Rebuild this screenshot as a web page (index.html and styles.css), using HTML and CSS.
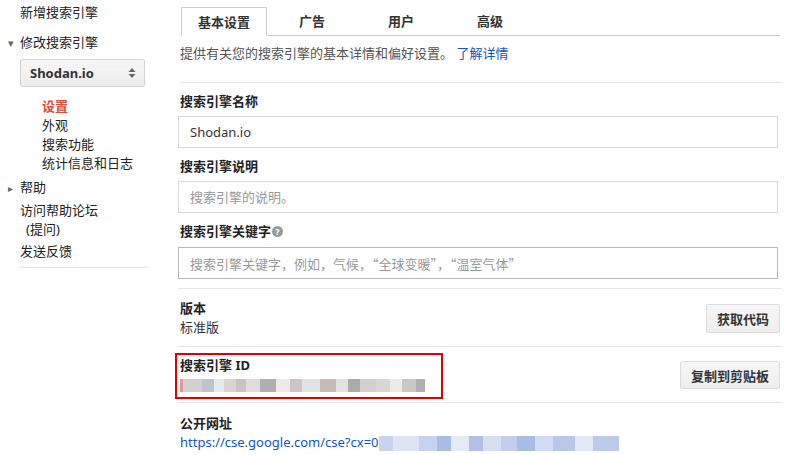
FILE: index.html
```html
<!DOCTYPE html>
<html lang="zh-CN">
<head>
    <meta charset="UTF-8">
    <title>搜索引擎设置</title>
    <link rel="stylesheet" href="styles.css">
</head>
<body>
<div class="page">
    <!-- left navigation -->
    <div class="sidebar">
        <div class="nav-item first">新增搜索引擎</div>
        <div class="nav-item toggle open"><span class="arrow">&#9662;</span>修改搜索引擎</div>
        <div class="engine-select">
            <span>Shodan.io</span>
            <svg width="8" height="12" viewBox="0 0 8 12"><path d="M4 1 L7.5 5 L0.5 5 Z M4 11 L7.5 7 L0.5 7 Z" fill="#666"/></svg>
        </div>
        <div class="sub-nav">
            <div class="sub-item active">设置</div>
            <div class="sub-item">外观</div>
            <div class="sub-item">搜索功能</div>
            <div class="sub-item">统计信息和日志</div>
        </div>
        <div class="nav-item toggle help"><span class="arrow small">&#9656;</span>帮助</div>
        <div class="nav-item forum">访问帮助论坛<br><span class="indent">(提问)</span></div>
        <div class="nav-item feedback">发送反馈</div>
    </div>

    <!-- main settings -->
    <div class="main">
        <div class="tabs">
            <div class="tab active">基本设置</div>
            <div class="tab">广告</div>
            <div class="tab">用户</div>
            <div class="tab">高级</div>
        </div>
        <p class="intro">提供有关您的搜索引擎的基本详情和偏好设置。 <a href="#">了解详情</a></p>

        <div class="section fields">
            <div class="field-label">搜索引擎名称</div>
            <input class="text-input" type="text" value="Shodan.io">
            <div class="field-label">搜索引擎说明</div>
            <input class="text-input" type="text" placeholder="搜索引擎的说明。">
            <div class="field-label">搜索引擎关键字<span class="help-icon">?</span></div>
            <input class="text-input dark" type="text" placeholder="搜索引擎关键字，例如，气候，“全球变暖”，“温室气体”">
        </div>

        <div class="section row">
            <div>
                <div class="field-label">版本</div>
                <div class="value">标准版</div>
            </div>
            <button class="btn">获取代码</button>
        </div>

        <div class="section row id-row">
            <div class="highlight">
                <div class="field-label">搜索引擎 ID</div>
                <div class="value"><span class="blur gray"></span></div>
            </div>
            <button class="btn">复制到剪贴板</button>
        </div>

        <div class="section last">
            <div class="field-label">公开网址</div>
            <div class="url"><a href="#">https://cse.google.com/cse?cx=0</a><span class="blur blue"></span></div>
        </div>
    </div>
</div>
</body>
</html>
```

FILE: styles.css
```css
body {
    margin: 0;
    font-family: "Noto Sans", "Noto Sans CJK SC", sans-serif;
    font-size: 13px;
    color: #222;
    background: #fff;
}

.page {
    display: flex;
}

/* sidebar */
.sidebar {
    width: 150px;
    padding-left: 20px;
    padding-top: 3px;
    flex-shrink: 0;
}

.nav-item {
    line-height: 19px;
}

.nav-item.toggle {
    margin-top: 11px;
}

.arrow {
    display: inline-block;
    width: 12px;
    margin-left: -12px;
    color: #666;
    font-size: 11px;
}

.arrow.small {
    font-size: 10px;
}

.engine-select {
    display: flex;
    justify-content: space-between;
    align-items: center;
    width: 125px;
    height: 28px;
    box-sizing: border-box;
    margin-top: 7px;
    padding: 0 8px 0 9px;
    border: 1px solid #d4d4d4;
    border-radius: 2px;
    background: linear-gradient(#f6f6f6, #ededed);
    font-weight: bold;
    color: #333;
}

.sub-nav {
    margin-top: 10px;
    padding-left: 22px;
}

.sub-item {
    line-height: 19px;
}

.sub-item.active {
    color: #dd4b39;
    font-weight: bold;
}

.nav-item.help {
    margin-top: 5px;
}

.nav-item.forum {
    margin-top: 3px;
}

.indent {
    padding-left: 6px;
}

.nav-item.feedback {
    margin-top: 3px;
    padding-bottom: 6px;
    width: 128px;
    border-bottom: 1px solid #e5e5e5;
}

/* main */
.main {
    width: 604px;
    margin-left: 8px;
    padding-top: 7px;
}

.tabs {
    display: flex;
    margin-left: 3px;
    border-bottom: 1px solid #ccc;
    width: 599px;
}

.tab {
    width: 88px;
    height: 28px;
    line-height: 28px;
    text-align: center;
    font-weight: bold;
    color: #333;
    box-sizing: border-box;
}

.tab.active {
    width: 86px;
    border: 1px solid #ccc;
    border-bottom-color: #fff;
    margin-bottom: -1px;
    height: 29px;
    background: #fff;
}

.tab + .tab {
    margin-left: 1px;
}

.intro {
    margin: 8px 0 0 2px;
    line-height: 19px;
    color: #555;
    padding-bottom: 19px;
    border-bottom: 1px solid #e5e5e5;
}

.intro a {
    color: #15c;
    text-decoration: none;
}

.section {
    border-bottom: 1px solid #e5e5e5;
    padding: 10px 2px 9px 2px;
}

.field-label {
    font-weight: bold;
    line-height: 19px;
    color: #222;
}

.text-input {
    display: block;
    width: 600px;
    height: 32px;
    box-sizing: border-box;
    margin: 5px 0 9px -2px;
    padding: 0 11px;
    border: 1px solid #d9d9d9;
    font-family: "Noto Sans", "Noto Sans CJK SC", sans-serif;
    font-size: 13px;
    color: #333;
}

.text-input::placeholder {
    color: #999;
}

.text-input.dark {
    border-color: #b9b9b9;
    margin-top: 6px;
    margin-bottom: 0;
    font-family: "Noto Sans CJK SC", sans-serif;
    font-feature-settings: "fwid";
}

.fields {
    padding-top: 9px;
    padding-bottom: 9px;
}

.help-icon {
    display: inline-block;
    width: 11px;
    height: 11px;
    line-height: 11px;
    border-radius: 50%;
    background: #999;
    color: #fff;
    font-size: 9px;
    text-align: center;
    vertical-align: 1px;
    margin-left: 1px;
}

.row {
    display: flex;
    justify-content: space-between;
    align-items: center;
}

.value {
    line-height: 19px;
    color: #333;
}

.btn {
    height: 29px;
    padding: 0 10px;
    border: 1px solid #dcdcdc;
    border-radius: 2px;
    background: linear-gradient(#f6f6f6, #eeeeee);
    font-family: "Noto Sans", "Noto Sans CJK SC", sans-serif;
    font-size: 13px;
    font-weight: bold;
    color: #333;
}

.id-row {
    padding-top: 9px;
    padding-bottom: 8px;
}

.id-row .btn {
    height: 28px;
}

.highlight {
    box-sizing: border-box;
    width: 268px;
    margin: -3px 0 -5px -5px;
    padding: 1px 3px 3px 3px;
    border: 2px solid #e10000;
}

.blur {
    display: inline-block;
    height: 12px;
    vertical-align: middle;
}

.blur.gray {
    width: 245px;
    height: 13px;
    background: linear-gradient(90deg, #e79a95 0 3px, #d3cfd2 3px 22px, #bfc4cc 22px 34px, #e6e8ec 34px 44px, #d8d4d2 44px 56px, #c9c2c2 56px 66px, #e0dcda 66px 80px, #b0aeae 80px 96px, #ece9e6 96px 110px, #cfc3c9 110px 122px, #e2e3e6 122px 140px, #c7bbb6 140px 156px, #e4e2dd 156px 168px, #a9acac 168px 180px, #d3d0cd 180px 196px, #dad6d3 196px 210px, #ebebeb 210px 222px, #c8c8c4 222px 236px, #b3adb7 236px 245px);
}

.last {
    border-bottom: none;
    padding-top: 11px;
}

.url {
    line-height: 19px;
}

.url a {
    color: #15c;
    text-decoration: none;
}

.blur.blue {
    width: 240px;
    height: 15px;
    background: linear-gradient(90deg, #c9d2ee 0 14px, #dfe4f4 14px 40px, #c6d3f0 40px 58px, #a9bce3 58px 72px, #e6eaf5 72px 90px, #b2bfe6 90px 104px, #d6def0 104px 122px, #c3cdec 122px 138px, #a7bde4 138px 156px, #d3dbf2 156px 174px, #b9c8ea 174px 196px, #e2e8f5 196px 214px, #bdcbea 214px 240px);
}
```
